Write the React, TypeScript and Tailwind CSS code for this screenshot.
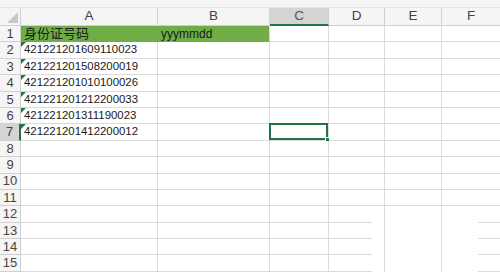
import React from 'react';

const COLS = ['A', 'B', 'C', 'D', 'E', 'F'];
const ID_NUMBERS = [
  '421221201609110023',
  '421221201508200019',
  '421221201010100026',
  '421221201212200033',
  '421221201311190023',
  '421221201412200012',
];
const ROWS = Array.from({ length: 15 }, (_, i) => i + 1);

const font = { fontFamily: '"Liberation Sans", "Noto Sans CJK SC", sans-serif' };

const Cell: React.FC<{ row: number; col: number }> = ({ row, col }) => {
  const green = row === 1 && col < 2;
  const selected = row === 7 && col === 2;
  // rows 12-15 lose part of their lower gridline around columns D-F
  const faded = row >= 12 && col >= 3;

  let text: string | null = null;
  let size = 'text-[11.4px]';
  if (row === 1 && col === 0) {
    text = '身份证号码';
    size = 'text-[13px]';
  }
  if (row === 1 && col === 1) {
    text = 'yyymmdd';
    size = 'text-[12px]';
  }
  if (row >= 2 && row <= 7 && col === 0) text = ID_NUMBERS[row - 2];

  return (
    <div
      className={`relative flex items-center pl-[3px] text-[#1a1a1a] ${size} ${
        col === 5 ? '' : 'border-r'
      } ${faded ? '' : 'border-b'} ${green ? 'bg-[#70ad47] border-[#70ad47]' : 'bg-white border-[#dadada]'} ${
        green && col === 1 ? 'border-r-[#dadada]' : ''
      }`}
    >
      {text && <span className="leading-none whitespace-nowrap">{text}</span>}
      {row >= 2 && row <= 7 && col === 0 && (
        <span className="absolute left-0 top-0 w-0 h-0 border-t-[5px] border-r-[5px] border-t-[#1e7b3c] border-r-transparent" />
      )}
      {faded && col === 3 && <span className="absolute bottom-0 left-0 w-[43px] h-px bg-[#dadada]" />}
      {faded && col === 5 && <span className="absolute bottom-0 left-[36px] right-0 h-px bg-[#dadada]" />}
      {selected && (
        <span className="absolute -left-px -top-px right-0 bottom-0 border-2 border-[#217346]">
          <span className="absolute -right-[4px] -bottom-[4px] w-[5px] h-[5px] bg-[#217346] border border-white" />
        </span>
      )}
    </div>
  );
};

export default function App() {
  return (
    <div className="w-[500px] h-[273px] overflow-hidden bg-white" style={font}>
      <div className="h-[8px] bg-[#f4f4f4] border-b border-[#e4e4e4]" />
      <div className="grid grid-cols-[21px_137px_112px_59px_56px_57px_58px] grid-rows-[18px_repeat(15,16.4px)]">
        {/* header row */}
        <div className="relative bg-[#f5f5f5] border-r border-b border-[#d0d0d0]">
          <span className="absolute right-[2px] bottom-[2px] w-0 h-0 border-b-[11px] border-l-[11px] border-b-[#c8c8c8] border-l-transparent" />
        </div>
        {COLS.map((c, i) => (
          <div
            key={c}
            className={`flex items-center justify-center text-[13.5px] text-[#444] border-[#d0d0d0] ${
              i === 5 ? '' : 'border-r'
            } ${i === 2 ? 'bg-[#d4d4d4] border-b-2 border-b-[#217346] text-[#555]' : 'bg-[#f5f5f5] border-b'}`}
          >
            {c}
          </div>
        ))}
        {ROWS.map((r) => (
          <React.Fragment key={r}>
            <div
              className={`flex items-center justify-center text-[13px] text-[#444] border-b border-[#d0d0d0] ${
                r === 7 ? 'bg-[#d4d4d4] border-r-2 border-r-[#217346]' : 'bg-[#f5f5f5] border-r'
              }`}
            >
              {r}
            </div>
            {COLS.map((c, ci) => (
              <Cell key={c} row={r} col={ci} />
            ))}
          </React.Fragment>
        ))}
      </div>
    </div>
  );
}
